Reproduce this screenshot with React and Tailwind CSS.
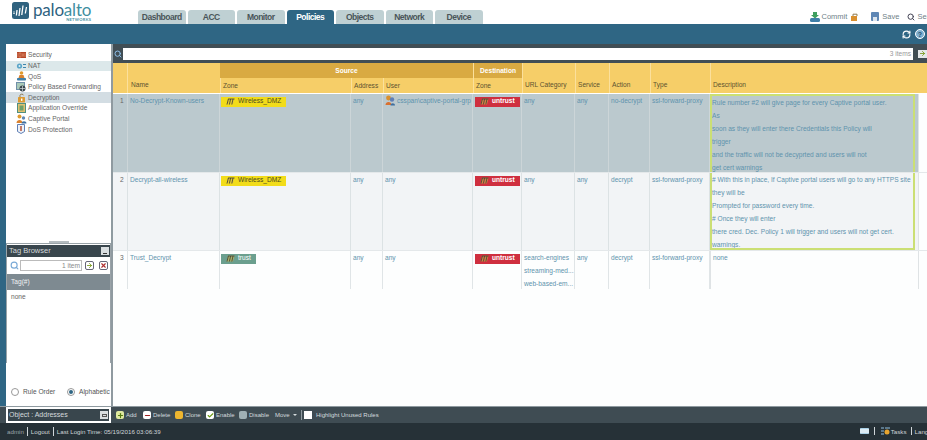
import { RefreshCw, Search, Plus, Minus, Check, ArrowRight, X } from 'lucide-react';

const tabs = ['Dashboard', 'ACC', 'Monitor', 'Policies', 'Objects', 'Network', 'Device'];

const menu = [
  { label: 'Security', icon: 'security' },
  { label: 'NAT', icon: 'nat', hover: true },
  { label: 'QoS', icon: 'qos' },
  { label: 'Policy Based Forwarding', icon: 'pbf' },
  { label: 'Decryption', icon: 'lock', active: true },
  { label: 'Application Override', icon: 'override' },
  { label: 'Captive Portal', icon: 'captive' },
  { label: 'DoS Protection', icon: 'dos' },
];

const cols = 'grid grid-cols-[15px_92px_131px_32px_90px_49px_53px_34px_41px_60px_205px_4px]';

const rows = [
  {
    n: 1, name: 'No-Decrypt-Known-users', zone: 'Wireless_DMZ', user: 'csspan\\captive-portal-grp', action: 'no-decrypt', h: 'h-[78px]', bg: 'bg-[#bbc9ce]',
    url: ['any'], desc: ['Rule number #2 will give page for every Captive portal user.', 'As', 'soon as they will enter there Credentials this Policy will', 'trigger', 'and the traffic will not be decyprted and users will not', 'get cert warnings'],
  },
  {
    n: 2, name: 'Decrypt-all-wireless', zone: 'Wireless_DMZ', user: 'any', action: 'decrypt', h: 'h-[78px]', bg: 'bg-[#f2f4f6]',
    url: ['any'], desc: ['# With this in place, If Captive portal users will go to any HTTPS site', 'they will be', 'Prompted for password every time.', '# Once they will enter', 'there cred. Dec. Policy 1 will trigger and users will not get cert.', 'warnings.'],
  },
  {
    n: 3, name: 'Trust_Decrypt', zone: 'trust', user: 'any', action: 'decrypt', h: 'h-[39px]', bg: 'bg-[#fdfefe]',
    url: ['search-engines', 'streaming-med...', 'web-based-em...'], desc: ['none'],
  },
];

function Logo() {
  return (
    <svg width="17" height="17" viewBox="0 0 17 17" className="shrink-0">
      <rect width="17" height="17" rx="2.5" fill="#2f627f" />
      <g stroke="#fff" strokeWidth="1.3" fill="none">
        <path d="M2 9.5v3" strokeDasharray="1 0.6" />
        <path d="M5 8l-.6 5.5" />
        <path d="M8 6l-1 8" />
        <path d="M11 3.5l-1.2 9.5" />
        <path d="M14.5 5l-1.2 6.5" />
      </g>
    </svg>
  );
}

function MenuIcon({ name }) {
  const base = { width: 11, height: 10, viewBox: '0 0 11 10', className: 'shrink-0' };
  if (name === 'security') {
    return (
      <svg {...base}>
        <rect x="1" y="2" width="9" height="6" fill="#b5482a" />
        <path d="M1 4h9M1 6h9M4 2v2M7 4v2M4 6v2" stroke="#e8a07a" strokeWidth=".6" />
      </svg>
    );
  }
  if (name === 'nat') {
    return (
      <svg {...base}>
        <circle cx="3.5" cy="5" r="2.6" fill="#5aa5c8" />
        <circle cx="3.5" cy="5" r="1" fill="#dff0f6" />
        <path d="M7 3.5h3M7 6.5h3" stroke="#3d86ad" strokeWidth="1.2" />
      </svg>
    );
  }
  if (name === 'qos') {
    return (
      <svg {...base}>
        <circle cx="5.5" cy="2" r="1.8" fill="#e09a2f" />
        <path d="M3.5 4h4l1 3h-6z" fill="#d9822f" />
        <rect x="1" y="7" width="9" height="2.5" rx=".8" fill="#3f7fa8" />
      </svg>
    );
  }
  if (name === 'pbf') {
    return (
      <svg {...base}>
        <rect x=".5" y=".5" width="8" height="7" fill="#a9c9b8" stroke="#6f8fa8" />
        <circle cx="6.5" cy="6.5" r="3" fill="#39464d" />
        <path d="M6.5 4v5M4 6.5h5" stroke="#d5dde0" strokeWidth=".7" />
      </svg>
    );
  }
  if (name === 'lock') {
    return (
      <svg {...base}>
        <rect x="2" y="4" width="7" height="5.5" rx=".6" fill="#dc9a32" />
        <path d="M4 4V2.3C4 .8 7.5 .8 7.5 2.3" stroke="#8f7a50" strokeWidth="1" fill="none" />
        <rect x="5" y="5.5" width="1.4" height="2.4" fill="#fff" />
      </svg>
    );
  }
  if (name === 'override') {
    return (
      <svg {...base}>
        <rect x="1.5" y=".5" width="8" height="9" fill="#e0c070" stroke="#4f8f7f" />
        <rect x="3.5" y="2.5" width="4" height="5" fill="#6f9f6a" />
      </svg>
    );
  }
  if (name === 'captive') {
    return (
      <svg {...base}>
        <circle cx="3.5" cy="2.5" r="2" fill="#e09a2f" />
        <path d="M.5 9c0-4 6-4 6 0z" fill="#d9822f" />
        <circle cx="7.5" cy="4" r="1.7" fill="#5f87b5" />
        <path d="M5.5 9.5c0-3 5-3 5 0z" fill="#3f6f9f" />
      </svg>
    );
  }
  return (
    <svg {...base}>
      <path d="M1.5.5h7v7L5 9.5 1.5 7.5z" fill="#eef2f8" stroke="#5f7fb5" />
      <path d="M5 2v5" stroke="#b5482a" strokeWidth="1.4" />
    </svg>
  );
}

function ZoneTag({ label, color }) {
  return (
    <span className={`inline-flex h-[10px] items-center gap-[3px] pl-[5px] pr-[5px] leading-none ${color}`}>
      <svg width="9" height="7" viewBox="0 0 9 7" className="shrink-0">
        <path d="M.5 6.5 2 .8h6.5L7 6.5z" fill="#e0c048" fillOpacity=".55" />
        <path d="M1 6.5 2.4 1M3.4 6.5 4.6 1M5.8 6.5 7 1M2 1h6.5" stroke="#4a4a38" strokeWidth=".9" fill="none" />
      </svg>
      {label}
    </span>
  );
}

function Cell({ children, className = '' }) {
  return <div className={`overflow-hidden whitespace-nowrap border-r border-[#d3dadd]/70 px-[2px] ${className}`}>{children}</div>;
}

function RuleRow({ r }) {
  const descBox =
    r.n === 3
      ? 'border-l border-[#dfe3e5] bg-[#fdfefe] pl-[2px]'
      : `${r.bg} border-x-2 border-[#cbdf74] ${r.n === 1 ? 'border-t-2' : 'border-b-2'}`;
  return (
    <div className={`${cols} ${r.h} ${r.n === 1 ? '' : 'border-t border-[#e4e8ea]'} leading-[13px] text-[#5e93ad]`}>
      <Cell className={`${r.bg} pl-[7px] text-[#666]`}>{r.n}</Cell>
      <Cell className={r.bg}>{r.name}</Cell>
      <Cell className={`${r.bg} pt-[2px] pl-[1px]`}>
        {r.zone === 'trust'
          ? <ZoneTag label="trust" color="bg-[#6b9f8e] text-white" />
          : <ZoneTag label={r.zone} color="bg-[#f2dc1a] text-[#4a4a20]" />}
      </Cell>
      <Cell className={r.bg}>any</Cell>
      <Cell className={`${r.bg} flex items-start gap-[2px] pr-0`}>
        {r.user !== 'any' && (
          <svg width="10" height="11" viewBox="0 0 10 11" className="mt-[1px] shrink-0">
            <circle cx="3.5" cy="3" r="2.4" fill="#d98f2f" />
            <circle cx="7" cy="4.5" r="2.2" fill="#5f7fb5" />
            <path d="M.5 10c0-4 6-4 6 0z" fill="#d9702f" />
            <path d="M5.5 10.5c0-3 4.5-3 4.5 0z" fill="#3f6f9f" />
          </svg>
        )}
        <span>{r.user}</span>
      </Cell>
      <Cell className={`${r.bg} pt-[2px] pl-[2px]`}><ZoneTag label="untrust" color="bg-[#cf2f3f] font-bold text-white" /></Cell>
      <Cell className={r.bg}>
        {r.url.map((u) => <div key={u}>{u}</div>)}
      </Cell>
      <Cell className={r.bg}>any</Cell>
      <Cell className={r.bg}>{r.action}</Cell>
      <Cell className={r.bg}>ssl-forward-proxy</Cell>
      <div className={`${descBox} overflow-hidden whitespace-nowrap`}>
        {r.desc.map((d, i) => <div key={i}>{d}</div>)}
      </div>
      <div className={`border-r border-[#dfe3e5] ${r.n === 3 ? '' : r.bg}`} />
    </div>
  );
}

function ToolButton({ icon, label, className = '' }) {
  return (
    <span className={`flex items-center gap-[2px] ${className}`}>
      {icon}
      {label}
    </span>
  );
}

export default function App() {
  return (
    <div className="flex h-[440px] w-[927px] flex-col overflow-hidden bg-white font-['Liberation_Sans',Arial,sans-serif] text-[6.6px] text-[#555]">
      {/* top bar */}
      <header className="flex h-[24px] items-end bg-white">
        <div className="flex w-[138px] shrink-0 items-start gap-[4px] self-start pl-[12px] pt-[2px]">
          <Logo />
          <div className="flex flex-col items-end font-['Lato','Noto_Sans',sans-serif]">
            <span className="whitespace-nowrap text-[17px] leading-[15px] tracking-[-0.2px]">
              <span className="text-[#2f627f]">palo</span>
              <span className="text-[#3f8f9f]">alto</span>
            </span>
            <span className="text-[4px] font-bold leading-[5px] tracking-[0.3px] text-[#3f8f9f]">NETWORKS</span>
          </div>
        </div>
        <nav className="flex gap-[2px]">
          {tabs.map((t) => (
            <div
              key={t}
              className={`flex h-[14px] w-[47.5px] items-center justify-center rounded-t-[3px] text-[8.5px] font-bold tracking-[-0.5px] ${
                t === 'Policies' ? 'bg-[#2f6684] text-white' : 'bg-[#bfd0d3] text-[#4a5559]'
              }`}
            >
              {t}
            </div>
          ))}
        </nav>
        <div className="ml-[327px] flex items-center self-start whitespace-nowrap pt-[11px] text-[7.5px] text-[#6f7f88]">
          <svg width="10" height="10" viewBox="0 0 10 10" className="mr-[2px]"><path d="M3 0h4v3h2L5 6.5 1 3h2z" fill="#3f9f5f" /><rect x="0" y="6" width="10" height="4" rx="1.5" fill="#3f7fa8" /></svg>
          Commit
          <svg width="8" height="8" viewBox="0 0 8 8" className="ml-[4px]"><rect x="0" y="3" width="6" height="5" fill="#d9902f" /><path d="M2 3V1.2h4V3" stroke="#8f7a50" fill="none" /></svg>
          <svg width="8" height="9" viewBox="0 0 8 9" className="ml-[12px] mr-[3px]"><rect width="8" height="9" rx="1" fill="#5f87b5" /><rect x="2" y="5" width="4" height="4" fill="#dde6ee" /></svg>
          Save
          <Search size={8} strokeWidth={3} className="ml-[8px] mr-[2px] text-[#445]" />
          Search
        </div>
      </header>

      {/* blue strip */}
      <div className="flex h-[20px] items-center justify-end gap-[4px] bg-[#2f6684] pr-[2px]">
        <RefreshCw size={9} strokeWidth={3} className="text-white" />
        <span className="flex h-[10px] w-[10px] items-center justify-center rounded-full border border-white bg-[#7fb0d0] text-[7px] font-bold leading-none text-[#1f4f6f]">?</span>
      </div>

      <div className="flex min-h-0 flex-1">
        {/* left nav */}
        <div className="w-[6px] bg-[#2f6684]" />
        <aside className="flex w-[105px] flex-col bg-white">
          <div className="flex h-[199px] flex-col pt-[6px]">
            {menu.map((m) => (
              <div
                key={m.label}
                className={`flex h-[10.6px] items-center gap-[1px] pl-[10px] ${m.active ? 'bg-[#d3dde3]' : m.hover ? 'bg-[#dce8ea]' : ''}`}
              >
                <MenuIcon name={m.icon} />
                <span className="whitespace-nowrap text-[#666]">{m.label}</span>
              </div>
            ))}
            <span className="mt-auto h-[2px] w-[20px] self-center bg-[#b5bcc0]" />
          </div>
          <div className="flex h-[120px] flex-col border-x border-t border-[#9aa3a8] pt-px">
            <div className="flex h-[12px] items-center justify-between bg-[#39464d] pl-[2px] pr-[1px] text-[7.5px] text-[#d6dadc]">
              <span>Tag Browser</span>
              <span className="flex h-[8px] w-[8px] items-end justify-center bg-[#d9dee0] pb-[1px]"><span className="h-px w-[4px] bg-[#333]" /></span>
            </div>
            <div className="flex h-[17px] items-center pl-[3px]">
              <Search size={9} strokeWidth={3} className="text-[#79a9d6]" />
              <div className="ml-[1px] flex h-[11px] w-[62px] items-center justify-end border border-[#bbb] pr-[1px] text-[#888]">1 item</div>
              <span className="ml-[3px] flex h-[9px] w-[9px] items-center justify-center rounded-[2px] border border-[#667] text-[#7a9a20]"><ArrowRight size={7} strokeWidth={3} /></span>
              <span className="ml-[5px] flex h-[9px] w-[9px] items-center justify-center rounded-[2px] border border-[#667] text-[#b03030]"><X size={7} strokeWidth={4} /></span>
            </div>
            <div className="flex h-[16px] items-center bg-[#7e8a91] pl-[4px] text-[#f0f2f3]">Tag(#)</div>
            <div className="pl-[4px] pt-[2px] leading-[9px] text-[#666]">none</div>
          </div>
          <div className="flex flex-1 items-end pb-[9px] pl-[5px]">
            <label className="flex w-[56px] items-center gap-[4px] whitespace-nowrap text-[#555]">
              <span className="h-[8px] w-[8px] shrink-0 rounded-full border border-[#999]" />
              Rule Order
            </label>
            <label className="flex items-center gap-[4px] whitespace-nowrap text-[#555]">
              <span className="flex h-[8px] w-[8px] shrink-0 items-center justify-center rounded-full border border-[#999]"><span className="h-[4px] w-[4px] rounded-full bg-[#2f6684]" /></span>
              Alphabetic
            </label>
          </div>
        </aside>
        <div className="w-[2px] bg-[#8f9aa0]" />

        {/* main */}
        <main className="flex min-w-0 flex-1 flex-col">
          <div className="flex h-[19px] items-center bg-[#414e55] pl-[1px]">
            <Search size={8} strokeWidth={3} className="shrink-0 text-[#8fc0ea]" />
            <div className="ml-[1px] flex h-[12px] w-[791px] items-center justify-end bg-white pr-[2px] text-[#999]">3 items</div>
            <span className="ml-[5px] flex h-[8px] w-[9px] shrink-0 items-center justify-center bg-[#e4e8ea] text-[#7a9a20]"><ArrowRight size={7} strokeWidth={3} /></span>
          </div>

          <div className="grid h-[30px] grid-cols-[15px_92px_131px_32px_90px_49px_53px_34px_41px_60px_217px] grid-rows-[15px_15px] bg-[#f6ce68] text-[#5c5230]">
            <div className="row-span-2 border-r border-[#fbe09c]" />
            <div className="row-span-2 flex items-end pb-[3px] pl-[3px]">Name</div>
            <div className="col-span-3 flex items-center justify-center bg-[#d9aa42] font-bold text-white">Source</div>
            <div className="flex items-center justify-center border-l border-[#fbe09c] bg-[#d9aa42] font-bold text-white">Destination</div>
            {['URL Category', 'Service', 'Action', 'Type', 'Description'].map((h) => (
              <div key={h} className="row-span-2 flex items-end border-l border-[#fbe09c] pb-[3px] pl-[2px]">{h}</div>
            ))}
            {['Zone', 'Address', 'User', 'Zone'].map((h, i) => (
              <div key={i} className="flex items-center border-l border-[#fbe09c] pl-[2px]">{h}</div>
            ))}
          </div>

          <div className="mt-px flex-1 bg-[#fdfefe]">
            {rows.map((r) => <RuleRow key={r.n} r={r} />)}
          </div>
        </main>
      </div>

      {/* action bar */}
      <div className="flex h-[17px] border-t border-[#8f9aa0] bg-[#3f4c53] text-[6px] text-[#d5dbde]">
        <div className="ml-[6px] flex w-[105px] items-center justify-between border-2 border-white bg-[#39464d] px-[1px] text-[7px]">
          <span>Object : Addresses</span>
          <span className="flex h-[8px] w-[8px] items-center justify-center bg-[#d9dee0]"><span className="h-[3px] w-[5px] border border-[#555]" /></span>
        </div>
        <div className="flex items-center pl-[5px]">
          <ToolButton className="w-[27px]" label="Add" icon={<span className="flex h-[8px] w-[8px] items-center justify-center rounded-[2px] bg-[#dfe9a0] text-[#557a10]"><Plus size={7} strokeWidth={4} /></span>} />
          <ToolButton className="w-[32px]" label="Delete" icon={<span className="flex h-[8px] w-[8px] items-center justify-center rounded-[2px] bg-white text-[#a02020]"><Minus size={7} strokeWidth={4} /></span>} />
          <ToolButton className="w-[31px]" label="Clone" icon={<span className="h-[8px] w-[8px] rounded-[2px] bg-[#edb52f]" />} />
          <ToolButton className="w-[33px]" label="Enable" icon={<span className="flex h-[8px] w-[8px] items-center justify-center rounded-[2px] bg-white text-[#6a9a10]"><Check size={7} strokeWidth={4} /></span>} />
          <ToolButton className="w-[36px]" label="Disable" icon={<span className="h-[8px] w-[8px] rounded-[2px] bg-[#9fb0b5]" />} />
          <span className="flex w-[26px] items-center gap-[3px]">Move <span className="border-x-[2px] border-t-[2px] border-x-transparent border-t-[#d5dbde]" /></span>
          <span className="h-[10px] w-px bg-[#8f9aa0]" />
          <span className="ml-[2px] flex items-center gap-[4px] whitespace-nowrap">
            <span className="h-[8px] w-[8px] bg-white" />
            Highlight Unused Rules
          </span>
        </div>
      </div>

      {/* footer */}
      <footer className="flex h-[17px] items-center whitespace-nowrap bg-[#263137] pl-[7px] text-[6.2px] text-[#cfd5d8]">
        <span className="shrink-0 text-[#9aa5aa]">admin</span>
        <span className="mx-[3px] h-[9px] w-px shrink-0 bg-[#cfd5d8]" />
        <span className="shrink-0">Logout</span>
        <span className="mx-[3px] h-[9px] w-px shrink-0 bg-[#cfd5d8]" />
        <span className="shrink-0">Last Login Time: 05/19/2016 03:06:39</span>
        <div className="ml-[699px] flex shrink-0 items-center">
          <span className="h-[6px] w-[9px] shrink-0 rounded-[1px] border-y border-[#a9d0e6] bg-[#dcebf4]" />
          <span className="ml-[5px] h-[8px] w-px shrink-0 bg-[#cfd5d8]" />
          <svg width="9" height="8" viewBox="0 0 9 8" className="ml-[6px] shrink-0"><path d="M0 1h3M0 4h3M0 7h3M4 1h5" stroke="#8fbfe0" /><circle cx="6" cy="5" r="2.5" fill="#e8a52f" /></svg>
          <span className="ml-[1px] shrink-0">Tasks</span>
          <span className="ml-[4px] h-[8px] w-px shrink-0 bg-[#cfd5d8]" />
          <span className="ml-[3px] shrink-0">Language</span>
        </div>
      </footer>
    </div>
  );
}
